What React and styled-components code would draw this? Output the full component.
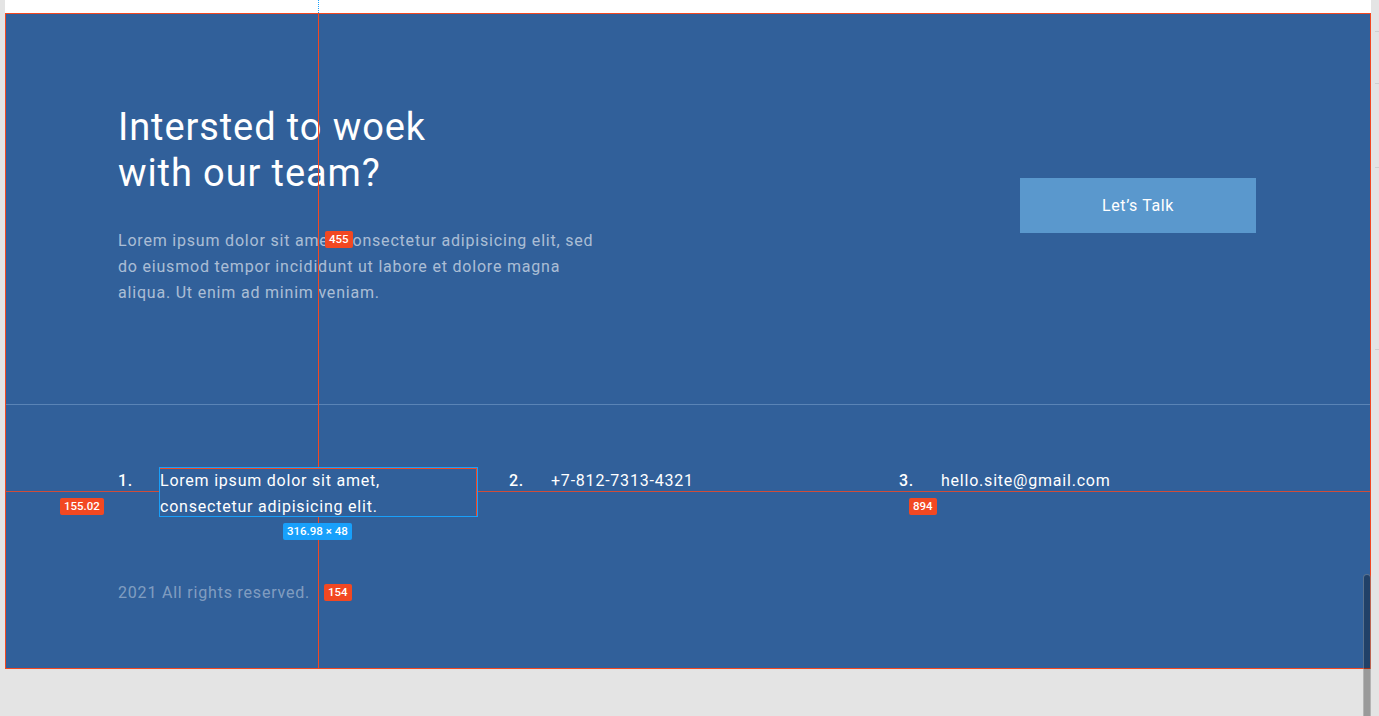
import React from "react";
import styled, { createGlobalStyle } from "styled-components";

const Global = createGlobalStyle`
  html, body { margin: 0; padding: 0; background: #e4e4e4; }
  body { font-family: Roboto, "Noto Sans", sans-serif; overflow: hidden; }
  * { box-sizing: border-box; }
`;

const Workspace = styled.div`
  position: relative;
  display: flex;
  width: 1379px;
  height: 716px;
  background: #e4e4e4;
  overflow: hidden;
`;

const Gutter = styled.div`
  width: 5px;
  flex: none;
`;

const Stage = styled.div`
  width: 1366px;
  flex: none;
  display: flex;
  flex-direction: column;
`;

const Paper = styled.div`
  height: 13px;
  background: #ffffff;
`;

const Ruler = styled.div`
  position: relative;
  width: 8px;
  flex: none;
`;

const Tick = styled.div`
  height: 1px;
  width: 4px;
  margin-left: 4px;
  background: #cfcfcf;
  margin-top: ${(p) => p.$gap}px;
`;

const Frame = styled.section`
  height: 656px;
  background: #31609a;
  border: 1px solid #f24822;
  display: flex;
  flex-direction: column;
  color: #ffffff;
`;

const Hero = styled.div`
  display: flex;
  align-items: center;
  justify-content: space-between;
  padding: 90px 114px 98px 112px;
  border-bottom: 1px solid #5a84b6;
`;

const HeroText = styled.div`
  display: flex;
  flex-direction: column;
  gap: 32px;
`;

const Title = styled.h2`
  margin: 0;
  font-family: Roboto, sans-serif;
  font-weight: 400;
  font-size: 38px;
  line-height: 46px;
  letter-spacing: 0.9px;
  color: #ffffff;
`;

const Lead = styled.p`
  margin: 0;
  width: 486px;
  font-size: 16px;
  line-height: 26px;
  letter-spacing: 0.8px;
  color: rgba(255, 255, 255, 0.6);
`;

const TalkButton = styled.button`
  width: 236px;
  height: 55px;
  border: none;
  background: #5a98cd;
  color: #ffffff;
  font-family: Roboto, sans-serif;
  font-size: 16px;
  letter-spacing: 0.6px;
  cursor: pointer;
`;

const Contacts = styled.ol`
  list-style: none;
  margin: 0;
  padding: 63px 0 0 112px;
  display: grid;
  grid-template-columns: 391px 390px auto;
`;

const Contact = styled.li`
  display: grid;
  grid-template-columns: 42px 317px;
  align-content: start;
  font-size: 16px;
  line-height: 26px;
  letter-spacing: 0.78px;
`;

const Num = styled.span`
  font-weight: 500;
`;

const Copy = styled.p`
  margin: 61px 0 0 112px;
  font-size: 16px;
  line-height: 24px;
  letter-spacing: 0.8px;
  color: rgba(255, 255, 255, 0.4);
`;

/* design-tool overlays */
const VLine = styled.div`
  position: absolute;
  left: 318px;
  width: 1px;
  top: ${(p) => p.$top}px;
  height: ${(p) => p.$h}px;
  background: ${(p) => (p.$dotted ? "transparent" : "#f24822")};
  border-left: ${(p) => (p.$dotted ? "1px dotted #18a0fb" : "none")};
`;

const HLine = styled.div`
  position: absolute;
  top: 491px;
  height: 1px;
  left: ${(p) => p.$left}px;
  width: ${(p) => p.$w}px;
  background: #cf4d3a;
`;

const SelectBox = styled.div`
  position: absolute;
  left: 159px;
  top: 467px;
  width: 319px;
  height: 50px;
  border: 1px solid #18a0fb;
  &::after {
    content: "";
    position: absolute;
    inset: 0;
    border: 1px solid #f24822;
    border-left: none;
    border-bottom: none;
  }
`;

const Badge = styled.div`
  position: absolute;
  left: ${(p) => p.$x}px;
  top: ${(p) => p.$y}px;
  height: 17px;
  padding: 0 4px;
  border-radius: 2px;
  background: ${(p) => (p.$blue ? "#18a0fb" : "#f24822")};
  color: #ffffff;
  font-family: Roboto, sans-serif;
  font-size: 11.5px;
  font-weight: 500;
  line-height: 17px;
  white-space: nowrap;
`;

const Thumb = styled.div`
  position: absolute;
  left: 1363px;
  top: 574px;
  width: 8px;
  height: 150px;
  border-radius: 4px 4px 0 0;
  background: rgba(0, 0, 0, 0.32);
  border: 1px solid rgba(255, 255, 255, 0.25);
`;

export default function App() {
  return (
    <>
      <Global />
      <Workspace>
        <Gutter />
        <Stage>
          <Paper />
          <Frame>
            <Hero>
              <HeroText>
                <Title>
                  Intersted to woek
                  <br />
                  with our team?
                </Title>
                <Lead>
                  Lorem ipsum dolor sit amet, consectetur adipisicing elit, sed do eiusmod tempor
                  incididunt ut labore et dolore magna aliqua. Ut enim ad minim veniam.
                </Lead>
              </HeroText>
              <TalkButton>Let’s Talk</TalkButton>
            </Hero>
            <Contacts>
              <Contact>
                <Num>1.</Num>
                <span>
                  Lorem ipsum dolor sit amet,
                  <br />
                  consectetur adipisicing elit.
                </span>
              </Contact>
              <Contact>
                <Num>2.</Num>
                <span>+7-812-7313-4321</span>
              </Contact>
              <Contact>
                <Num>3.</Num>
                <span>hello.site@gmail.com</span>
              </Contact>
            </Contacts>
            <Copy>2021 All rights reserved.</Copy>
          </Frame>
        </Stage>
        <Ruler>
          <Tick $gap={31} />
          <Tick $gap={51} />
          <Tick $gap={83} />
          <Tick $gap={181} />
        </Ruler>

        <VLine $dotted $top={0} $h={13} />
        <VLine $top={13} $h={454} />
        <VLine $top={517} $h={152} />
        <HLine $left={5} $w={154} />
        <HLine $left={478} $w={892} />
        <SelectBox />
        <Badge $x={325} $y={231}>455</Badge>
        <Badge $x={60} $y={498}>155.02</Badge>
        <Badge $x={283} $y={523} $blue>316.98 × 48</Badge>
        <Badge $x={909} $y={498}>894</Badge>
        <Badge $x={324} $y={584}>154</Badge>
        <Thumb />
      </Workspace>
    </>
  );
}
